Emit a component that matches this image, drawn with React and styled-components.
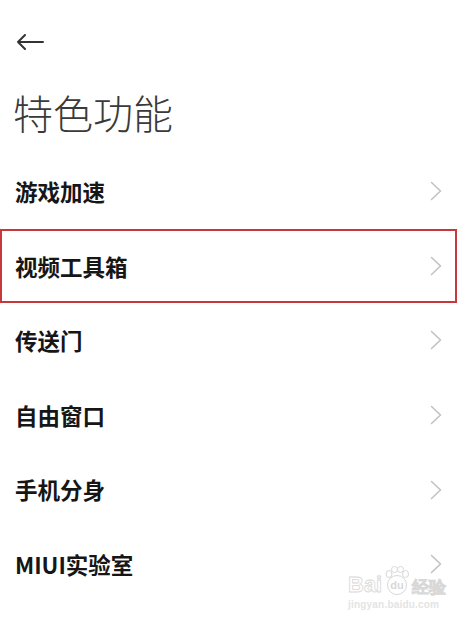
import React from 'react';
import styled, { createGlobalStyle } from 'styled-components';

const GlobalStyle = createGlobalStyle`
  html, body {
    margin: 0;
    padding: 0;
    background: #ffffff;
  }
  body {
    font-family: "Noto Sans CJK SC", "Noto Sans", sans-serif;
    color: #111;
  }
`;

const Page = styled.div`
  position: relative;
  width: 469px;
  height: 619px;
  overflow: hidden;
  background: #fff;
`;

const BackBar = styled.div`
  height: 84px;
  display: flex;
  align-items: center;
  padding-left: 16px;
`;

const Title = styled.h1`
  margin: 0;
  height: 56px;
  padding-left: 13px;
  font-size: 40px;
  line-height: 56px;
  font-weight: 300;
  color: #3a3a3a;
`;

const List = styled.div`
  margin-top: 14px;
  display: flex;
  flex-direction: column;
`;

const Row = styled.div`
  height: 74.6px;
  box-sizing: border-box;
  display: flex;
  align-items: center;
  justify-content: space-between;
  padding: 0 27px 0 15px;
  ${(p) =>
    p.$highlighted &&
    `
    margin-right: 12px;
    border: 2px solid #c8373b;
    padding: 0 13px 0 13px;
  `}
`;

const Label = styled.span`
  font-size: 22.5px;
  font-weight: 600;
  color: #161616;
  line-height: 1;
`;

const Watermark = styled.div`
  position: absolute;
  left: 348px;
  top: 566px;
  display: flex;
  flex-direction: column;
  align-items: flex-start;
  pointer-events: none;
`;

const MarkLine = styled.div`
  display: flex;
  align-items: flex-end;
  gap: 2px;
`;

const MarkText = styled.span`
  font-family: "Liberation Sans", sans-serif;
  font-size: ${(p) => p.$size}px;
  font-weight: 700;
  line-height: 1;
  color: #fff;
  -webkit-text-stroke: 0.8px #d8d8d8;
`;

const MarkUrl = styled.span`
  margin-top: 3px;
  font-family: "Liberation Sans", sans-serif;
  font-size: 10px;
  font-weight: 700;
  color: #e4e4e4;
  letter-spacing: 0.2px;
`;

const BackArrow = () => (
  <svg width="28" height="16" viewBox="0 0 28 16">
    <path
      d="M27 8H2M9 1L2 8l7 7"
      fill="none"
      stroke="#333"
      strokeWidth="2"
      strokeLinecap="round"
      strokeLinejoin="round"
    />
  </svg>
);

const Chevron = () => (
  <svg width="12" height="20" viewBox="0 0 12 20">
    <path
      d="M1.5 1.5L10.5 10L1.5 18.5"
      fill="none"
      stroke="#c2c2c2"
      strokeWidth="1.6"
      strokeLinecap="round"
      strokeLinejoin="round"
    />
  </svg>
);

const Paw = () => (
  <svg width="26" height="30" viewBox="0 0 26 30">
    <g fill="#fff" stroke="#d8d8d8" strokeWidth="1">
      <ellipse cx="5" cy="8" rx="3" ry="3.5" />
      <ellipse cx="10.5" cy="3.5" rx="3" ry="3" />
      <ellipse cx="16.5" cy="3.5" rx="3" ry="3" />
      <ellipse cx="21.5" cy="8" rx="3" ry="3.5" />
      <circle cx="13" cy="19" r="9.5" />
    </g>
    <text
      x="13"
      y="23"
      textAnchor="middle"
      fontFamily="Liberation Sans, sans-serif"
      fontWeight="700"
      fontSize="11"
      fill="#d8d8d8"
    >
      du
    </text>
  </svg>
);

const items = ['游戏加速', '视频工具箱', '传送门', '自由窗口', '手机分身', 'MIUI实验室'];

const App = () => {
  return (
    <Page>
      <GlobalStyle />
      <BackBar>
        <BackArrow />
      </BackBar>
      <Title>特色功能</Title>
      <List>
        {items.map((name, i) => (
          <Row key={name} $highlighted={i === 1}>
            <Label>{name}</Label>
            <Chevron />
          </Row>
        ))}
      </List>
      <Watermark>
        <MarkLine>
          <MarkText $size={22}>Bai</MarkText>
          <Paw />
          <MarkText $size={17}>经验</MarkText>
        </MarkLine>
        <MarkUrl>jingyan.baidu.com</MarkUrl>
      </Watermark>
    </Page>
  );
};

export default App;
